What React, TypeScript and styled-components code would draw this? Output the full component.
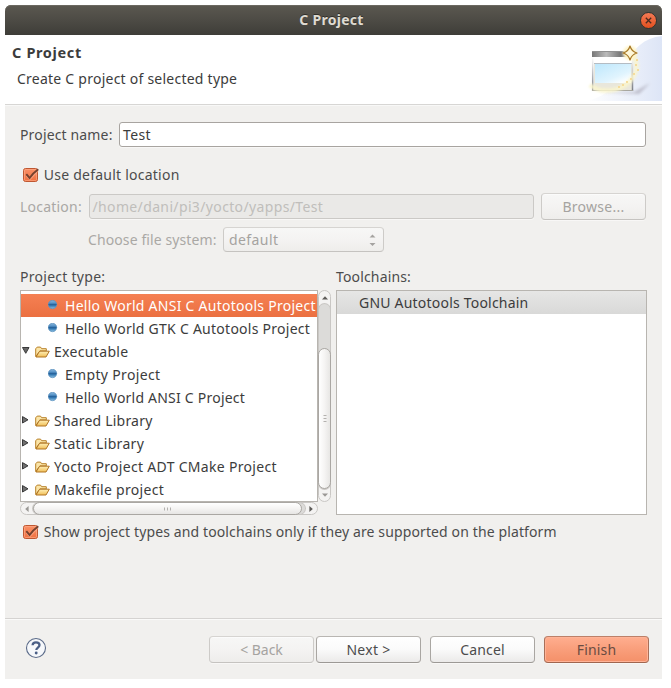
import React from 'react';
import styled, { createGlobalStyle, css } from 'styled-components';

const GlobalStyle = createGlobalStyle`
  * { box-sizing: border-box; }
  body {
    margin: 0;
    background: #fff;
    color: #3c3c3c;
    font: 14px/20px 'Noto Sans', 'Open Sans', sans-serif;
  }
  svg { display: block; flex: none; }
`;

const Window = styled.main`
  display: flex;
  flex-direction: column;
  width: 657px;
  height: 674px;
  margin: 5px;
  background: #f1f0ee;
  border-radius: 6px 6px 0 0;
`;

const TitleBar = styled.header`
  display: grid;
  grid-template-columns: 1fr auto 1fr;
  align-items: center;
  height: 30px;
  padding-right: 5px;
  border-radius: 6px 6px 0 0;
  background: linear-gradient(#5b5850, #4d4b45 50%, #3e3d38);
  box-shadow: inset 0 1px #6b6860;
  color: #dfdbd2;
`;

const WindowTitle = styled.span`
  grid-column: 2;
  padding-left: 1px;
  font-weight: 700;
  letter-spacing: 0.27px;
  text-shadow: 0 -1px #302f2b;
`;

const CloseButton = styled.button`
  display: grid;
  place-items: center;
  justify-self: end;
  width: 17px;
  height: 17px;
  padding: 0;
  border: 1px solid #35332e;
  border-radius: 50%;
  background: linear-gradient(#f47a55, #e2501f);
`;

const Banner = styled.section`
  display: flex;
  justify-content: space-between;
  height: 70px;
  margin-bottom: 1px;
  background: #fff;
  border-bottom: 1px solid #d7d6d4;
  box-shadow: 0 1px #f8f8f7;
`;

const BannerText = styled.div`
  padding: 7px 0 0 7px;
`;

const Heading = styled.h1`
  margin: 0;
  font-size: 14.5px;
  line-height: 20px;
  font-weight: 700;
  letter-spacing: 0.65px;
`;

const Summary = styled.p<{ $spacing: number }>`
  margin: 7px 0 0 5px;
  letter-spacing: ${(p) => p.$spacing}px;
`;

const Body = styled.section`
  display: flex;
  flex-direction: column;
  flex: 1;
  padding: 16px 15px 0;
`;

const Row = styled.div<{ $height: number; $top?: number; $indent?: number }>`
  display: flex;
  align-items: center;
  height: ${(p) => p.$height}px;
  margin-top: ${(p) => p.$top ?? 0}px;
  padding-left: ${(p) => p.$indent ?? 0}px;
`;

const Label = styled.label<{ $width?: number; $spacing: number; $muted?: boolean }>`
  flex: none;
  width: ${(p) => (p.$width ? `${p.$width}px` : 'auto')};
  letter-spacing: ${(p) => p.$spacing}px;
  white-space: nowrap;
  color: ${(p) => (p.$muted ? '#aaa8a5' : '#4c4c4c')};
`;

const Field = styled.div<{ $width: number; $spacing: number; $muted?: boolean }>`
  width: ${(p) => p.$width}px;
  height: 25px;
  padding-left: 3px;
  border: 1px solid ${(p) => (p.$muted ? '#cbc9c6' : '#a8a4a0')};
  border-radius: 3px;
  background: ${(p) => (p.$muted ? '#eae9e7' : '#fff')};
  color: ${(p) => (p.$muted ? '#c0bebb' : '#3c3c3c')};
  line-height: 23px;
  letter-spacing: ${(p) => p.$spacing}px;
  box-shadow: 0 1px #f8f7f6;
`;

const buttonTone = {
  normal: css`
    border-color: #b9b6b2 #a9a6a2 #9c9995;
    background: linear-gradient(#fff, #fafafa 50%, #ebeae9);
    color: #4c4c4c;
  `,
  muted: css`
    border-color: #d6d4d1 #cdcbc8 #c5c3c0;
    background: linear-gradient(#f7f7f6, #f4f3f2 50%, #eeedeb);
    color: #a5a3a0;
  `,
  primary: css`
    border-color: #bd8068 #a96f58 #a0664f;
    background: linear-gradient(#ffae8f, #f99e7b 50%, #f49069);
    box-shadow: inset 0 0 0 1px #ffb397, 0 1px #f8f7f6;
    color: #6a4c42;
  `,
};

const Button = styled.button<{ $tone: keyof typeof buttonTone; $spacing: number; $gap?: number }>`
  width: 105px;
  height: 27px;
  margin-left: ${(p) => p.$gap ?? 0}px;
  padding: 0;
  border: 1px solid;
  border-radius: 4px;
  font: inherit;
  letter-spacing: ${(p) => p.$spacing}px;
  box-shadow: inset 0 1px #fff8, 0 1px #f8f7f6;
  ${(p) => buttonTone[p.$tone]}
`;

const Select = styled.div`
  display: flex;
  align-items: center;
  justify-content: space-between;
  width: 161px;
  height: 25px;
  padding: 0 7px 0 5px;
  border: 1px solid;
  border-radius: 4px;
  letter-spacing: 0.42px;
  ${buttonTone.muted}
`;

const Panels = styled.div`
  display: flex;
  gap: 5px;
  height: 225px;
  margin-top: 3px;
`;

const TreePane = styled.div`
  display: grid;
  grid-template-columns: 298px 13px;
  grid-template-rows: 212px 13px;
`;

const Tree = styled.ul`
  margin: 0;
  padding: 3px 0 0;
  overflow: hidden;
  list-style: none;
  border: 1px solid #b8b5b0;
  background: #fff;
`;

const TreeItem = styled.li<{ $leaf?: boolean; $selected?: boolean; $spacing: number }>`
  display: flex;
  align-items: center;
  height: 23px;
  padding-left: ${(p) => (p.$leaf ? 27 : 0)}px;
  letter-spacing: ${(p) => p.$spacing}px;
  white-space: nowrap;
  ${(p) => p.$selected && css`
    background: linear-gradient(#f58053, #eb7041);
    color: #fff;
  `}
  svg { margin-right: ${(p) => (p.$leaf ? 7 : 4)}px; }
`;

const Toolchains = styled.div`
  width: 311px;
  border: 1px solid #b8b5b0;
  background: #fff;
`;

const ToolchainRow = styled.div`
  height: 23px;
  padding-left: 22px;
  background: linear-gradient(#e6e6e5, #d9d9d8);
  line-height: 23px;
  letter-spacing: 0.21px;
`;

const ScrollTrack = styled.div<{ $vertical?: boolean }>`
  display: flex;
  flex-direction: ${(p) => (p.$vertical ? 'column' : 'row')};
  justify-content: space-between;
  align-items: center;
  border: 1px solid #c9c7c4;
  border-radius: 7px;
  background: #f4f3f2;
`;

const Arrow = styled.span<{ $size: number }>`
  display: grid;
  place-items: center;
  flex: none;
  width: ${(p) => p.$size}px;
  height: ${(p) => p.$size}px;
`;

const Trough = styled.div<{ $vertical?: boolean }>`
  display: flex;
  flex: 1;
  align-self: stretch;
  flex-direction: ${(p) => (p.$vertical ? 'column' : 'row')};
  justify-content: ${(p) => (p.$vertical ? 'flex-end' : 'flex-start')};
  border-radius: 6px;
  background: #dcdbd9;
  box-shadow: 0 0 0 1px #c9c7c4;
`;

const Thumb = styled.div<{ $vertical?: boolean; $length: number }>`
  display: grid;
  place-items: center;
  flex: none;
  margin: ${(p) => (p.$vertical ? '0 -1px' : '-1px 0')};
  width: ${(p) => (p.$vertical ? '13px' : `${p.$length}px`)};
  height: ${(p) => (p.$vertical ? `${p.$length}px` : '13px')};
  border: 1px solid #aaa7a3;
  border-radius: 7px;
  background: linear-gradient(${(p) => (p.$vertical ? 'to right' : 'to bottom')}, #fff, #f5f4f3 50%, #e7e6e4);
`;

const Footer = styled.footer`
  display: flex;
  align-items: center;
  height: 61px;
  padding: 1px 13px 0 20px;
  border-top: 1px solid #d5d3d1;
  box-shadow: inset 0 1px #fafaf9;
`;

const HelpButton = styled.button`
  margin-bottom: 3px;
  padding: 0;
  border: 0;
  background: none;
`;

const Actions = styled.div`
  display: flex;
  margin-left: auto;
`;

const CheckBox = () => (
  <svg width="18" height="18" viewBox="0 0 18 18">
    <defs>
      <linearGradient id="check" x2="0" y2="1">
        <stop stopColor="#fa9168" />
        <stop offset="1" stopColor="#f0703f" />
      </linearGradient>
    </defs>
    <rect x="1.5" y="2.5" width="14" height="13" rx="2" fill="url(#check)" stroke="#bf5731" />
    <rect x="2.5" y="3.5" width="12" height="11" rx="1" fill="none" stroke="#ffad8c" opacity=".6" />
    <path d="M4.2 9.500 7.800 13.300 16 4.800" fill="none" stroke="#ffb496" strokeWidth="1.500" opacity=".6" />
    <path d="M4.300 8.200 7.600 12 C10 8.700 12.500 6 16.300 3.300" fill="none" stroke="#74412e" strokeWidth="1.900" />
  </svg>
);

const Dot = () => (
  <svg width="10" height="11" viewBox="0 0 10 11">
    <defs>
      <linearGradient id="dot" x2="0" y2="1">
        <stop stopColor="#86b3da" />
        <stop offset=".35" stopColor="#5592c7" />
        <stop offset=".45" stopColor="#2a679f" />
        <stop offset=".6" stopColor="#2d72ad" />
        <stop offset="1" stopColor="#8ec2e5" />
      </linearGradient>
    </defs>
    <circle cx="4.500" cy="4.500" r="4.200" fill="url(#dot)" stroke="#5c90bd" strokeWidth=".7" />
    <path d="M.5 4.500h8" stroke="#2a629a" strokeWidth=".8" />
  </svg>
);

const Expander = ({ open }: { open?: boolean }) => (
  <svg width="10" height="12" viewBox="0 0 10 12">
    {open ? (
      <path d="M1.5 1.5h6.5L4.75 7.3z" fill="#686868" stroke="#393939" />
    ) : (
      <path d="M1.5 1.6v6.4L7 4.8z" fill="#707070" stroke="#393939" />
    )}
  </svg>
);

const Folder = () => (
  <svg width="15" height="14" viewBox="0 0 15 14">
    <defs>
      <linearGradient id="folder" x2="0" y2="1">
        <stop stopColor="#fff0b8" />
        <stop offset="1" stopColor="#f0bd55" />
      </linearGradient>
    </defs>
    <path d="M.7 11.500V3.800L2.200 2.100h3.300l1.200 1.600h4.600v2.200H5z" fill="#fbe5a8" stroke="#b88028" />
    <path d="M1 12 4.600 6.200h9.700L11 12z" fill="url(#folder)" stroke="#b07424" strokeLinejoin="round" />
  </svg>
);

const turns = { up: 0, right: 90, down: 180, left: 270 };

const Triangle = ({ to, color = '#9a9895' }: { to: keyof typeof turns; color?: string }) => (
  <svg width="6" height="6" viewBox="0 0 6 6">
    <path d="M0 4.6 3 1.2 6 4.6z" fill={color} transform={`rotate(${turns[to]} 3 3)`} />
  </svg>
);

const Grip = ({ vertical }: { vertical?: boolean }) => (
  <svg width="8" height="8" viewBox="0 0 8 8">
    <path
      d={vertical ? 'M2.500 .5h3M2.500 3.500h3M2.500 6.500h3' : 'M.5 2.500v3M3.500 2.500v3M6.500 2.500v3'}
      stroke="#b3b1ae"
      strokeWidth="1"
    />
  </svg>
);

const WizardArt = () => (
  <svg width="76" height="66" viewBox="0 0 76 66">
    <defs>
      <linearGradient id="sweep">
        <stop stopColor="#fff" />
        <stop offset=".5" stopColor="#eef2fb" />
        <stop offset="1" stopColor="#dde5f6" />
      </linearGradient>
      <linearGradient id="bar">
        <stop stopColor="#777" />
        <stop offset=".35" stopColor="#bbb" />
        <stop offset=".7" stopColor="#777" />
        <stop offset="1" stopColor="#bbb" />
      </linearGradient>
      <linearGradient id="pane" x2=".8" y2="1">
        <stop stopColor="#bde7fc" />
        <stop offset=".7" stopColor="#e0f4fe" />
        <stop offset="1" stopColor="#fff" />
      </linearGradient>
      <linearGradient id="edge" gradientUnits="userSpaceOnUse" x1="0" y1="22" x2="0" y2="56">
        <stop stopColor="#fff" />
        <stop offset="1" stopColor="#777b83" />
      </linearGradient>
      <filter id="soft" x="-20%" y="-50%" width="140%" height="200%">
        <feGaussianBlur stdDeviation="1.8" />
      </filter>
      <filter id="glow" x="-30%" y="-30%" width="160%" height="160%">
        <feGaussianBlur stdDeviation="1" />
      </filter>
    </defs>
    <path d="M0 66C24 61 31 48 40 30 47 13 58 3 76 1v65z" fill="url(#sweep)" />
    <path d="M12 57h36l16-9-11 11z" fill="#8b8594" opacity=".45" filter="url(#soft)" />
    <path d="M6 16h41v40H6z" fill="#fff" />
    <path d="M6 16h41v6H6z" fill="url(#bar)" />
    <path d="M6 16.5h41" stroke="#919191" />
    <path d="M8 28h38v27H8z" fill="#e9e7db" />
    <path d="M8 28.500h38" stroke="#b4bcc3" />
    <path d="M9 29h36v19H9z" fill="url(#pane)" />
    <path d="M6.700 22v34M46.500 22v34" stroke="url(#edge)" strokeWidth="1.500" />
    <path d="M6 55.500h41" stroke="#a7a69f" />
    <path
      d="M4 50C13 58 33 58 44 46 52 37 52 28 47 20"
      fill="none"
      stroke="#faf5cd"
      strokeWidth="4.500"
      opacity=".85"
      filter="url(#glow)"
    />
    <circle cx="44" cy="18" r="7" fill="#fff5c8" filter="url(#glow)" />
    <path
      d="M51 24v2M50 29v2M52 34v2M48 38v2M45 43v2M41 46v2M37 49v2M33 51v2"
      stroke="#f5dc9c"
      strokeWidth="2"
    />
    <path
      d="M44 11q1.500 5.500 7 7-5.500 1.500-7 7-1.500-5.500-7-7 5.500-1.500 7-7z"
      fill="#fff8d9"
      stroke="#a87928"
      strokeWidth="1.2"
      strokeLinejoin="round"
    />
  </svg>
);

const HelpIcon = () => (
  <svg width="22" height="22" viewBox="0 0 22 22">
    <circle cx="11" cy="11" r="9.5" fill="#f6f8fb" stroke="#5b6b89" strokeWidth="1.1" />
    <path
      d="M7.6 8.300C7.700 6.200 9.200 5.300 11 5.300c2 0 3.500 1 3.500 2.800 0 2.500-3.200 2.500-3.200 5"
      fill="none"
      stroke="#4b5f86"
      strokeWidth="2.3"
    />
    <circle cx="11.2" cy="16" r="1.450" fill="#4b5f86" />
  </svg>
);

type Item = { text: string; spacing: number; leaf?: boolean; open?: boolean; selected?: boolean };

const items: Item[] = [
  { text: 'Hello World ANSI C Autotools Project', spacing: 0.26, leaf: true, selected: true },
  { text: 'Hello World GTK C Autotools Project', spacing: 0.26, leaf: true },
  { text: 'Executable', spacing: 0.33, open: true },
  { text: 'Empty Project', spacing: 0.33, leaf: true },
  { text: 'Hello World ANSI C Project', spacing: 0.22, leaf: true },
  { text: 'Shared Library', spacing: 0.2 },
  { text: 'Static Library', spacing: 0.34 },
  { text: 'Yocto Project ADT CMake Project', spacing: 0.31 },
  { text: 'Makefile project', spacing: 0.29 },
];

export default function App() {
  return (
    <>
      <GlobalStyle />
      <Window>
        <TitleBar>
          <WindowTitle>C Project</WindowTitle>
          <CloseButton aria-label="Close">
            <svg width="7" height="7" viewBox="0 0 7 7">
              <path d="m.8.800 5.400 5.400m0-5.400L.8 6.200" stroke="#4a2a1e" strokeWidth="1.300" />
            </svg>
          </CloseButton>
        </TitleBar>
        <Banner>
          <BannerText>
            <Heading>C Project</Heading>
            <Summary $spacing={0.24}>Create C project of selected type</Summary>
          </BannerText>
          <WizardArt />
        </Banner>
        <Body>
          <Row $height={25}>
            <Label $width={99} $spacing={0.15}>Project name:</Label>
            <Field $width={527} $spacing={0.4}>Test</Field>
          </Row>
          <Row $height={20} $top={18} $indent={2}>
            <CheckBox />
            <Label $spacing={0.23}>&nbsp;Use default location</Label>
          </Row>
          <Row $height={27} $top={8}>
            <Label $width={68.5} $spacing={0.22} $muted>Location:</Label>
            <Field $width={445.5} $spacing={0.36} $muted>/home/dani/pi3/yocto/yapps/Test</Field>
            <Button $tone="muted" $spacing={0.27} $gap={7}>Browse...</Button>
          </Row>
          <Row $height={25} $top={7} $indent={68}>
            <Label $width={135} $spacing={0.1} $muted>Choose file system:</Label>
            <Select>
              default
              <svg width="7" height="13" viewBox="0 0 7 13">
                <path d="M.5 4.500 3.500 1.500l3 3zM.5 10l3 3 3-3z" fill="#a5a3a0" />
              </svg>
            </Select>
          </Row>
          <Row $height={20} $top={15}>
            <Label $width={316} $spacing={0.27}>Project type:</Label>
            <Label $spacing={0.15}>Toolchains:</Label>
          </Row>
          <Panels>
            <TreePane>
              <Tree>
                {items.map((item) => (
                  <TreeItem key={item.text} $leaf={item.leaf} $selected={item.selected} $spacing={item.spacing}>
                    {item.leaf ? (
                      <Dot />
                    ) : (
                      <>
                        <Expander open={item.open} />
                        <Folder />
                      </>
                    )}
                    {item.text}
                  </TreeItem>
                ))}
              </Tree>
              <ScrollTrack $vertical>
                <Arrow $size={13}><Triangle to="up" color="#5d5b58" /></Arrow>
                <Trough $vertical>
                  <Thumb $vertical $length={141}><Grip vertical /></Thumb>
                </Trough>
                <Arrow $size={12}><Triangle to="down" /></Arrow>
              </ScrollTrack>
              <ScrollTrack>
                <Arrow $size={12}><Triangle to="left" /></Arrow>
                <Trough>
                  <Thumb $length={269}><Grip /></Thumb>
                </Trough>
                <Arrow $size={12}><Triangle to="right" color="#5d5b58" /></Arrow>
              </ScrollTrack>
            </TreePane>
            <Toolchains>
              <ToolchainRow>GNU Autotools Toolchain</ToolchainRow>
            </Toolchains>
          </Panels>
          <Row $height={20} $top={7} $indent={2}>
            <CheckBox />
            <Label $spacing={0.12}>&nbsp;Show project types and toolchains only if they are supported on the platform</Label>
          </Row>
        </Body>
        <Footer>
          <HelpButton aria-label="Help"><HelpIcon /></HelpButton>
          <Actions>
            <Button $tone="muted" $spacing={-0.05}>&lt; Back</Button>
            <Button $tone="normal" $spacing={0.3} $gap={2}>Next &gt;</Button>
            <Button $tone="normal" $spacing={0.12} $gap={9}>Cancel</Button>
            <Button $tone="primary" $spacing={0.15} $gap={9}>Finish</Button>
          </Actions>
        </Footer>
      </Window>
    </>
  );
}
